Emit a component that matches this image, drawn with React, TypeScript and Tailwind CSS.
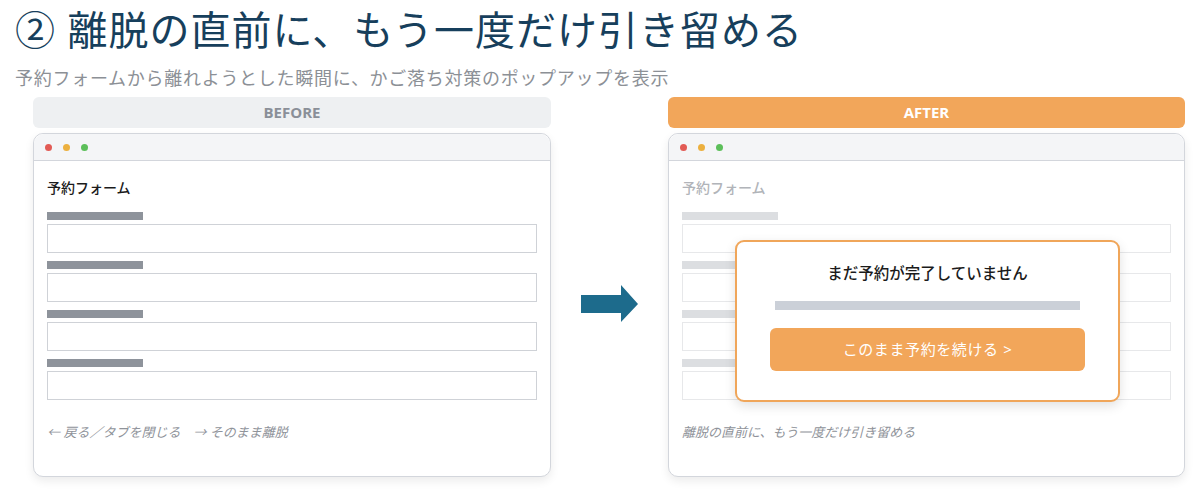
import React from "react";

const jp = "font-['Noto_Sans','Noto_Sans_CJK_JP',sans-serif]";

function Dots() {
  return (
    <div className="flex h-[27px] items-center gap-[11px] rounded-t-[10px] border-b border-[#d3d6dc] bg-[#f4f5f7] pl-[11px]">
      <span className="h-[7px] w-[7px] rounded-full bg-[#e25b55]" />
      <span className="h-[7px] w-[7px] rounded-full bg-[#ecb03f]" />
      <span className="h-[7px] w-[7px] rounded-full bg-[#5cbf5a]" />
    </div>
  );
}

function Field({ faded }: { faded?: boolean }) {
  return (
    <div className="flex flex-col gap-[4px]">
      <div className={`h-[8px] w-[96px] ${faded ? "bg-[#dcdee1]" : "bg-[#8e939b]"}`} />
      <div
        className={`h-[29px] w-full border bg-white ${faded ? "border-[#e7e8ea]" : "border-[#cfd2d7]"}`}
      />
    </div>
  );
}

function Window({ faded, footer, children }: { faded?: boolean; footer: string; children?: React.ReactNode }) {
  return (
    <div className="relative mt-[5px] h-[344px] rounded-[10px] border border-[#d3d6dc] bg-white shadow-[0_4px_10px_rgba(0,0,0,0.08)]">
      <Dots />
      <div className="px-[13px] pt-[17px]">
        <div className={`text-[14px] leading-[20px] font-medium ${faded ? "text-[#b1b4b9]" : "text-[#1b1b1b]"}`}>
          予約フォーム
        </div>
        <div className="mt-[14px] flex flex-col gap-[8px]">
          <Field faded={faded} />
          <Field faded={faded} />
          <Field faded={faded} />
          <Field faded={faded} />
        </div>
        <div className="mt-[23px] text-[13px] leading-[18px] italic text-[#8f939a]">{footer}</div>
      </div>
      {children}
    </div>
  );
}

export default function App() {
  return (
    <div className={`h-[496px] w-[1200px] overflow-hidden bg-white ${jp}`}>
      <div className="pl-[15px] pt-[6px]">
        <h1 className="text-[40px] leading-[48px] font-normal tracking-[0.025em] text-[#173f5c]">
          ② 離脱の直前に、もう一度だけ引き留める
        </h1>
        <p className="mt-[13px] text-[18px] leading-[22px] tracking-[0.04em] text-[#8c9096]">
          予約フォームから離れようとした瞬間に、かご落ち対策のポップアップを表示
        </p>
      </div>

      <div className="mt-[8px] flex pl-[33px] pr-[15px]">
        <div className="w-[518px]">
          <div className="flex h-[31px] items-center justify-center rounded-[6px] bg-[#eef0f2] font-['Open_Sans',sans-serif] text-[15px] font-bold text-[#8a8f98]">
            BEFORE
          </div>
          <Window footer="← 戻る／タブを閉じる　→ そのまま離脱" />
        </div>

        <div className="flex flex-1 items-center justify-center pt-[34px]">
          <svg width="58" height="38" viewBox="0 0 58 38">
            <path d="M0 10 H40 V0 L57 19 L40 37 V28 H0 Z" fill="#1d6b8c" />
          </svg>
        </div>

        <div className="w-[517px]">
          <div className="flex h-[31px] items-center justify-center rounded-[6px] bg-[#f2a65a] font-['Open_Sans',sans-serif] text-[15px] font-bold text-white">
            AFTER
          </div>
          <Window faded footer="離脱の直前に、もう一度だけ引き留める">
            <div className="absolute left-[66px] top-[106px] flex h-[162px] w-[385px] flex-col items-center rounded-[9px] border-2 border-[#f0a65a] bg-white pt-[20px] shadow-[0_4px_12px_rgba(0,0,0,0.12)]">
              <div className="text-[15.5px] leading-[22px] font-medium text-[#1b1b1b]">まだ予約が完了していません</div>
              <div className="mt-[17px] h-[9px] w-[305px] bg-[#cbd0d8]" />
              <div className="mt-[18px] flex h-[43px] w-[315px] items-center justify-center rounded-[6px] bg-[#f2a65a] text-[15px] tracking-[0.04em] text-white">
                このまま予約を続ける &gt;
              </div>
            </div>
          </Window>
        </div>
      </div>
    </div>
  );
}
